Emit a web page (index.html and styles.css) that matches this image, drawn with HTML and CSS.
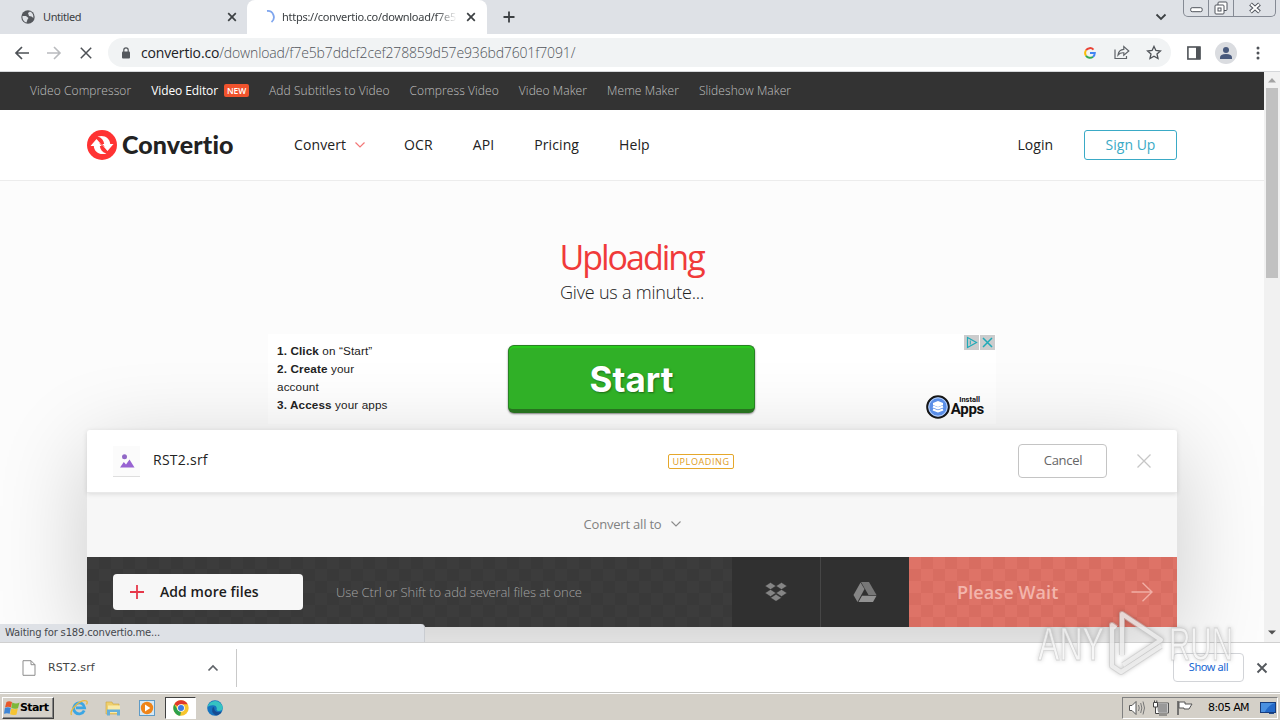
FILE: index.html
```html
<!DOCTYPE html>
<html lang="en">
<head>
    <meta charset="UTF-8">
    <title>Convertio</title>
    <link rel="stylesheet" href="styles.css">
</head>
<body>
    <div class="tab-strip">
        <div class="tab">
            <svg width="14" height="14" viewBox="0 0 14 14"><circle cx="7" cy="7" r="6.7" fill="#54575c"/><path d="M1.500 6 L5 6 L7.500 8 L6.500 9.500 L5.500 12.500 C3 12 1 9 1.500 6 Z M7 3 L9 1.600 C11.500 2.500 12.700 5 12.300 8 L10.500 6.500 L8 6 Z" fill="#dee1e6"/></svg>
            <span class="tab-title">Untitled</span>
            <svg width="10" height="10" viewBox="0 0 10 10"><path d="M1.200 1.200 L8.800 8.800 M8.800 1.200 L1.200 8.800" stroke="#3c4043" stroke-width="1.700"/></svg>
        </div>
        <div class="tab active">
            <svg width="14" height="14" viewBox="0 0 14 14"><path d="M6 1 A6.200 6.200 0 0 1 10.500 12" fill="none" stroke="#7fa6ee" stroke-width="1.800"/></svg>
            <span class="tab-title">https://convertio.co/download/f7e5</span>
            <svg width="10" height="10" viewBox="0 0 10 10"><path d="M1.200 1.200 L8.800 8.800 M8.800 1.200 L1.200 8.800" stroke="#3c4043" stroke-width="1.700"/></svg>
        </div>
        <svg class="new-tab" width="12" height="12" viewBox="0 0 12 12"><path d="M6 0.500 V11.500 M0.500 6 H11.500" stroke="#3c4043" stroke-width="1.800"/></svg>
        <svg class="tab-search" width="12" height="8" viewBox="0 0 12 8"><path d="M1.500 1.500 L6 6 L10.500 1.500" fill="none" stroke="#3c4043" stroke-width="1.800"/></svg>
        <div class="window-buttons">
            <span class="win-min"><svg width="13" height="6" viewBox="0 0 13 6"><rect x="0.700" y="0.700" width="11.500" height="4" rx="1.500" fill="#fff" stroke="#50545c"/></svg></span>
            <span class="win-max"><svg width="14" height="14" viewBox="0 0 14 14"><rect x="4" y="1" width="9" height="8.500" rx="1" fill="#fff" stroke="#50545c"/><rect x="1" y="4" width="9" height="9" rx="1" fill="#fff" stroke="#50545c"/><rect x="4" y="7" width="3" height="3" fill="none" stroke="#50545c"/></svg></span>
            <span class="win-close"><svg width="14" height="12" viewBox="0 0 14 12"><path d="M2.500 2 L11.500 10 M11.500 2 L2.500 10" stroke="#50545c" stroke-width="4"/><path d="M2.900 2.300 L11.100 9.700 M11.100 2.300 L2.900 9.700" stroke="#fff" stroke-width="2"/></svg></span>
        </div>
    </div>

    <div class="toolbar">
        <svg class="back" width="16" height="14" viewBox="0 0 16 14"><path d="M15 7 H2 M8 1 L2 7 L8 13" fill="none" stroke="#4d5156" stroke-width="1.700"/></svg>
        <svg class="forward" width="16" height="14" viewBox="0 0 16 14"><path d="M1 7 H14 M8 1 L14 7 L8 13" fill="none" stroke="#b9bbbe" stroke-width="1.600"/></svg>
        <svg class="stop" width="12" height="12" viewBox="0 0 12 12"><path d="M0.800 0.800 L11.200 11.200 M11.200 0.800 L0.800 11.200" stroke="#4d5156" stroke-width="1.500"/></svg>
        <div class="address">
            <svg width="8" height="12" viewBox="0 0 8 12"><rect x="0" y="4.500" width="8" height="7" rx="1" fill="#54585d"/><path d="M1.800 5 V3 A2.200 2.200 0 0 1 6.200 3 V5" fill="none" stroke="#54585d" stroke-width="1.200"/></svg>
            <span class="url"><b>convertio.co</b>/download/f7e5b7ddcf2cef278859d57e936bd7601f7091/</span>
            <svg width="12" height="12" viewBox="0 0 12 12"><path d="M2 3.300 A4.800 4.800 0 0 1 9.500 2.600" fill="none" stroke="#ea4335" stroke-width="2"/><path d="M2 3.300 A4.900 4.900 0 0 0 2 8.700" fill="none" stroke="#fbbc05" stroke-width="2"/><path d="M2 8.700 A4.800 4.800 0 0 0 9 9.700" fill="none" stroke="#34a853" stroke-width="2"/><path d="M6 6 H10.800 Q10.700 8.500 9 9.700" fill="none" stroke="#4285f4" stroke-width="2"/></svg>
            <svg class="share" width="16" height="15" viewBox="0 0 16 15"><path d="M1 4.500 V13.500 H12.500 V11" fill="none" stroke="#5f6368" stroke-width="1.200"/><path d="M4 10 C4.500 6.500 7 4.500 9.800 4.400 V1.500 L14.800 6 L9.800 10.300 V7.800 C7.500 7.600 5.500 8.200 4 10 Z" fill="none" stroke="#5f6368" stroke-width="1.200"/></svg>
            <svg width="16" height="15" viewBox="0 0 16 15"><path d="M8 1.400 L9.900 5.500 L14.400 6 L11 9 L12 13.500 L8 11.200 L4 13.500 L5 9 L1.600 6 L6.100 5.500 Z" fill="none" stroke="#4d5156" stroke-width="1.300"/></svg>
        </div>
        <svg class="side-panel" width="14" height="14" viewBox="0 0 14 14"><rect x="0.900" y="1" width="12" height="12" fill="none" stroke="#4f5358" stroke-width="1.600"/><rect x="9" y="1" width="4.500" height="12" fill="#4f5358"/></svg>
        <svg class="avatar" width="22" height="22" viewBox="0 0 22 22"><circle cx="11" cy="11" r="11" fill="#dadce0"/><circle cx="11" cy="8" r="3" fill="#48597c"/><path d="M5 17 V15.500 Q5 12 11 12 T17 15.500 V17 Z" fill="#48597c"/></svg>
        <svg class="menu-dots" width="4" height="14" viewBox="0 0 4 14"><circle cx="2" cy="2" r="1.500" fill="#4f5358"/><circle cx="2" cy="7" r="1.500" fill="#4f5358"/><circle cx="2" cy="12" r="1.500" fill="#4f5358"/></svg>
    </div>

    <div class="viewport">
        <div class="page">
            <div class="top-links">
                <span>Video Compressor</span>
                <span class="current">Video Editor<em>NEW</em></span>
                <span>Add Subtitles to Video</span>
                <span>Compress Video</span>
                <span>Video Maker</span>
                <span>Meme Maker</span>
                <span>Slideshow Maker</span>
            </div>

            <div class="header">
                <div class="logo">
                    <svg width="30" height="30" viewBox="0 0 30 30"><circle cx="15" cy="15" r="15" fill="#ff3333"/><path d="M3.500 16 L9.500 9 L16 16 H12.800 C13.200 19.500 15.500 22.500 19.500 23.500 C12.500 25.500 7.200 22 6.800 16 Z" fill="#fff"/><path d="M26.500 14 L20.500 21 L14 14 H17.200 C16.800 10.500 14.500 7.500 10.500 6.500 C17.500 4.500 22.800 8 23.200 14 Z" fill="#fff"/><path d="M11.500 10.500 L17 16.500 M13 13.500 L18.500 19.500" stroke="#ff3333" stroke-width="1"/></svg>
                    <span>Convertio</span>
                </div>
                <div class="nav">
                    <span>Convert<svg width="12" height="8" viewBox="0 0 12 8"><path d="M1.500 1.500 L6 6 L10.500 1.500" fill="none" stroke="#f37777" stroke-width="1.200"/></svg></span>
                    <span>OCR</span>
                    <span>API</span>
                    <span>Pricing</span>
                    <span>Help</span>
                </div>
                <span class="login">Login</span>
                <span class="sign-up">Sign Up</span>
            </div>

            <div class="hero">
                <h1>Uploading</h1>
                <p>Give us a minute...</p>
            </div>

            <div class="ad">
                <div class="ad-steps">
                    <b>1. Click</b> on “Start”<br>
                    <b>2. Create</b> your<br>
                    account<br>
                    <b>3. Access</b> your apps
                </div>
                <div class="ad-start">Start</div>
                <div class="ad-side">
                    <div class="ad-choices">
                        <svg width="15" height="15" viewBox="0 0 15 15"><rect width="15" height="15" fill="#cbcccd"/><path d="M3.500 2.500 V12.500 L12.500 7.500 Z" fill="none" stroke="#20aab8" stroke-width="1.200"/><path d="M6.300 5.500 V9.500" stroke="#20aab8"/></svg>
                        <svg width="15" height="15" viewBox="0 0 15 15"><rect width="15" height="15" fill="#cbcccd"/><path d="M3 3 L12 12 M12 3 L3 12" stroke="#20aab8" stroke-width="1.500"/></svg>
                    </div>
                    <div class="ad-brand">
                        <svg width="24" height="24" viewBox="0 0 24 24"><circle cx="12" cy="12" r="10.800" fill="#5b8fe8" stroke="#161616" stroke-width="2"/><circle cx="12" cy="12" r="9.200" fill="none" stroke="#dce8fd" stroke-width="0.800"/><path d="M12 6 L17 8 V10 L12 12 L7 10 V8 Z" fill="#fff"/><path d="M7 11.500 L12 13.500 L17 11.500 M7 14.500 L12 16.500 L17 14.500" fill="none" stroke="#fff" stroke-width="2"/></svg>
                        <div><small>Install</small><strong>Apps</strong></div>
                    </div>
                </div>
            </div>

            <div class="card">
                <div class="file-row">
                    <div class="file-icon"><svg width="16" height="14" viewBox="0 0 16 14"><circle cx="5.500" cy="2.800" r="2.500" fill="#9168c6"/><path d="M1 13.500 L4.800 8 L7 10.500 L10.500 5.500 L15.500 13.500 Z" fill="#9863d2"/></svg></div>
                    <span class="file-name">RST2.srf</span>
                    <span class="status">UPLOADING</span>
                    <span class="cancel">Cancel</span>
                    <svg class="remove" width="16" height="16" viewBox="0 0 16 16"><path d="M1.500 1.500 L14.500 14.500 M14.500 1.500 L1.500 14.500" stroke="#c6c6c6" stroke-width="1.300"/></svg>
                </div>
                <div class="convert-row">
                    <span>Convert all to</span>
                    <svg width="12" height="8" viewBox="0 0 12 8"><path d="M1.500 1.500 L6 6 L10.500 1.500" fill="none" stroke="#8b8b8b" stroke-width="1.100"/></svg>
                </div>
                <div class="actions">
                    <div class="add-area">
                        <div class="add-files">
                            <svg width="14" height="14" viewBox="0 0 14 14"><path d="M7 0 V14 M0 7 H14" stroke="#e6384a" stroke-width="1.800"/></svg>
                            <span>Add more files</span>
                        </div>
                        <span class="hint">Use Ctrl or Shift to add several files at once</span>
                    </div>
                    <div class="source">
                        <svg width="22" height="20" viewBox="0 0 22 20"><path d="M5.500 0.500 L11 4 L5.500 7.500 L0 4 Z M16.500 0.500 L22 4 L16.500 7.500 L11 4 Z M5.500 7.500 L11 11 L5.500 14.500 L0 11 Z M16.500 7.500 L22 11 L16.500 14.500 L11 11 Z M11 12.300 L16.500 15.800 L11 19.300 L5.500 15.800 Z" fill="#858585" stroke="#303030" stroke-width="0.500"/></svg>
                    </div>
                    <div class="source">
                        <svg width="24" height="20" viewBox="0 0 24 20"><path d="M8 0 H16 L23.500 13 H15.500 Z" fill="#777"/><path d="M7.500 0.500 L11.500 7 L4.500 20 L0.500 13 Z" fill="#858585"/><path d="M9 13.800 H23.500 L20 20 H5.500 Z" fill="#929292"/></svg>
                    </div>
                    <div class="wait">
                        <span>Please Wait</span>
                        <svg width="22" height="20" viewBox="0 0 22 20"><path d="M0.500 10 H21 M11.500 0.800 L21 10 L11.500 19.200" fill="none" stroke="#f1aea5" stroke-width="1.400"/></svg>
                    </div>
                </div>
            </div>
        </div>
        <div class="scrollbar">
            <svg width="16" height="16" viewBox="0 0 16 16"><path d="M4 10.500 L8 6 L12 10.500 Z" fill="#a3a3a3"/></svg>
            <div class="thumb"></div>
            <svg class="down" width="16" height="16" viewBox="0 0 16 16"><path d="M4 4.500 H12 L8 8.500 Z" fill="#505050"/></svg>
        </div>
        <div class="status-bubble">Waiting for s189.convertio.me...</div>
    </div>

    <div class="downloads">
        <div class="download-item">
            <svg width="14" height="16" viewBox="0 0 14 16"><path d="M1 0.700 H9 L13 4.700 V15.300 H1 Z" fill="#fff" stroke="#8d8d8d"/><path d="M9 0.700 V4.700 H13" fill="none" stroke="#8d8d8d"/></svg>
            <span>RST2.srf</span>
            <svg class="caret" width="12" height="8" viewBox="0 0 12 8"><path d="M1.500 6.500 L6 2 L10.500 6.500" fill="none" stroke="#5f6368" stroke-width="1.700"/></svg>
        </div>
        <span class="show-all">Show all</span>
        <svg width="12" height="12" viewBox="0 0 12 12"><path d="M1.500 1.500 L10.500 10.500 M10.500 1.500 L1.500 10.500" stroke="#54585d" stroke-width="1.900"/></svg>
    </div>

    <div class="taskbar">
        <div class="start-button">
            <svg width="16" height="16" viewBox="0 0 16 16"><path d="M2.500 2 Q5 0.300 8 2 L7 7.500 Q4 6 1 7.500 Z" fill="#e8582b"/><path d="M8.300 2.500 Q12 4.500 15.500 2.500 L14 8.200 Q10.500 9.500 7.300 8 Z" fill="#7db83a"/><path d="M0.900 8 Q4 6.600 6.800 8.100 L5.700 13.800 Q3 12.500 0 13.800 Z" fill="#3f86d6"/><path d="M7.200 8.500 Q10.500 10 13.800 8.600 L12.500 14.500 Q9.500 15.800 6.100 14.300 Z" fill="#f6c431"/></svg>
            <span>Start</span>
        </div>
        <div class="quick-launch">
            <span><svg width="18" height="18" viewBox="0 0 18 18"><path d="M14.200 11.500 A5.500 5.500 0 1 1 14.600 8.800 H6" fill="none" stroke="#3ba6e4" stroke-width="2.800"/><path d="M1.500 16 C-1 11.500 10 0 16.500 2 C17.500 2.500 17 4.500 16.500 5.500" fill="none" stroke="#e9b93e" stroke-width="1.300"/></svg></span>
            <span><svg width="18" height="18" viewBox="0 0 18 18"><path d="M2 3 H8 L9 5 H15 V15 H2 Z" fill="#efcf6c" stroke="#c9a441" stroke-width="0.600"/><path d="M4 6.500 H16 V14 H4 Z" fill="#f9eaa8"/><path d="M3 16.500 V10.500 H16 V16.500 H13 V13 H6 V16.500 Z" fill="#67afd8"/></svg></span>
            <span><svg width="18" height="18" viewBox="0 0 18 18"><rect x="1.500" y="1.500" width="15" height="15" fill="#d5e8f5" stroke="#5f9bc6"/><circle cx="9" cy="9" r="6.200" fill="#ef8418"/><path d="M7 5.500 L12.300 9 L7 12.500 Z" fill="#fff"/></svg></span>
            <span class="running"><svg width="16" height="16" viewBox="0 0 16 16"><circle cx="8" cy="8" r="7.700" fill="#f7c52d"/><path d="M8 8 L1.300 4.200 A7.700 7.700 0 0 1 14.700 4.200 H8 Z" fill="#e0382c"/><path d="M1.300 4.200 L4.700 10 L8 11.800 L7.200 15.700 A7.700 7.700 0 0 1 1.300 4.200 Z" fill="#2da14c"/><circle cx="8" cy="8" r="3.800" fill="#fff"/><circle cx="8" cy="8" r="3" fill="#3d7be2"/></svg></span>
            <span><svg width="18" height="18" viewBox="0 0 18 18"><circle cx="9" cy="9" r="7.800" fill="#1673bf"/><path d="M1.500 8 A7.800 7.800 0 0 1 16.800 8.500 Q16.500 12 12.500 12 Q10 11.800 10.800 9.500 Q10.500 6 6.500 6.200 Q3 6.300 1.500 8 Z" fill="#35c3c2"/><path d="M7 8 Q4 13 10 16.600 Q14.500 15.500 15.700 12.800 Q8.500 14.500 8 8.500 Z" fill="#174c91"/></svg></span>
        </div>
        <div class="tray">
            <svg width="18" height="16" viewBox="0 0 18 16"><path d="M1.500 5.500 H4 L8 1.500 V14.500 L4 10.500 H1.500 Z" fill="#fff" stroke="#555"/><path d="M10.500 5 Q12 8 10.500 11 M12.700 3 Q15 8 12.700 13 M15 1.500 Q18 8 15 14.500" fill="none" stroke="#777"/></svg>
            <svg width="18" height="16" viewBox="0 0 18 16"><rect x="5" y="3.500" width="11" height="9" fill="#999" stroke="#fff"/><path d="M4.500 3 H16.500 V13 H4.500 M7 15 H15" fill="none" stroke="#555"/><path d="M1.500 2.500 H5.500 V7 H1.500 Z M2.500 0.500 V3 M4.800 0.500 V3 M3.500 7 V13.500 H7" fill="#fff" stroke="#444"/></svg>
            <svg width="18" height="16" viewBox="0 0 18 16"><path d="M2 1 V15" stroke="#555" stroke-width="1.500"/><path d="M3 2 H9 V4 H16 L13 9 H8 V8 H3 Z" fill="#fff" stroke="#555"/></svg>
            <span>8:05 AM</span>
            <svg width="16" height="14" viewBox="0 0 16 14"><rect x="0.500" y="1.500" width="15" height="10" fill="#2469c8" stroke="#163c7d"/><path d="M1 2 H15 Q8 4 5 11 H1 Z" fill="#4a90e0"/><path d="M9 12.500 H14" stroke="#234a88"/></svg>
        </div>
    </div>

    <svg class="watermark" width="204" height="76" viewBox="0 0 204 76">
        <g fill="#fff" fill-opacity="0.650" stroke="#c8c8c8" stroke-opacity="0.700" stroke-width="0.900">
            <text x="3" y="55" textLength="66" lengthAdjust="spacingAndGlyphs">ANY</text>
            <text x="134" y="55" textLength="64" lengthAdjust="spacingAndGlyphs">RUN</text>
        </g>
        <path class="mark-edge" d="M77 55 V20 L81 23 M87 50 V9 L126 35 L88 60 M77 55 V61 L86 67 L126 41"/>
        <path class="mark-line" d="M77 55 V20 L81 23 M87 50 V9 L126 35 L88 60 M77 55 V61 L86 67 L126 41"/>
    </svg>
</body>
</html>
```
FILE: styles.css
```css
* {
    box-sizing: border-box;
}

body {
    margin: 0;
    height: 720px;
    display: flex;
    flex-direction: column;
    overflow: hidden;
    position: relative;
    font-family: "Open Sans", sans-serif;
    background: #fff;
}

svg {
    display: block;
    flex: none;
}

span {
    white-space: nowrap;
}

/* browser chrome */
.tab-strip {
    height: 34px;
    flex: none;
    display: flex;
    align-items: center;
    background: #dee1e6;
    font-family: "Noto Sans", sans-serif;
    font-size: 11px;
    color: #3c4043;
}

.tab {
    width: 247px;
    height: 34px;
    padding: 0 10px 0 21px;
    display: flex;
    align-items: center;
}

.tab.active {
    width: 240px;
    padding: 0 11px 0 14px;
    background: #fff;
    border-radius: 8px 8px 0 0;
}

.tab-title {
    flex: 1;
    margin: 0 13px 0 8px;
    position: relative;
    top: -1px;
    letter-spacing: -0.4px;
}

.active .tab-title {
    margin: 0 9px 0 7px;
    letter-spacing: -0.27px;
    -webkit-mask-image: linear-gradient(to right, #000 88%, transparent);
}

.new-tab {
    margin-left: 16px;
}

.tab-search {
    margin-left: auto;
    margin-right: 16px;
}

.window-buttons {
    display: flex;
    align-self: flex-start;
    height: 17px;
    width: 93px;
    margin-right: 4px;
    border: 1px solid #858a94;
    border-top: 0;
    border-radius: 0 0 5px 5px;
}

.window-buttons span {
    display: flex;
    align-items: center;
    justify-content: center;
    width: 25px;
    border-right: 1px solid #858a94;
}

.window-buttons .win-min {
    padding-top: 4px;
}

.window-buttons .win-close {
    width: 41px;
    border: 0;
}

.toolbar {
    height: 38px;
    flex: none;
    display: flex;
    align-items: center;
    padding: 0 19px 0 14px;
    border-bottom: 1px solid #d5d7da;
}

.forward {
    margin-left: 16px;
}

.stop {
    margin-left: 18px;
}

.address {
    flex: 1;
    height: 29px;
    margin: 0 16px 0 16px;
    padding: 0 9px 0 14px;
    display: flex;
    align-items: center;
    background: #f1f3f4;
    border-radius: 15px;
}

.url {
    flex: 1;
    margin-left: 11px;
    font-size: 14px;
    font-weight: 300;
    letter-spacing: -0.15px;
    color: #50545a;
}

.url b {
    font-weight: 400;
    color: #202124;
}

.share {
    margin: 0 16px 0 18px;
}

.avatar {
    margin: 0 19px 0 14px;
}

.menu-dots {
    margin-right: 1px;
}

/* page area */
.viewport {
    height: 571px;
    flex: none;
    display: flex;
    position: relative;
    overflow: hidden;
    border-bottom: 1px solid #d0d0d0;
}

.page {
    width: 1264px;
    background: #fcfcfc;
    overflow: hidden;
}

.top-links {
    height: 38px;
    padding: 0 0 1px 30px;
    display: flex;
    align-items: center;
    gap: 20px;
    background: #333;
    color: #c0c0c0;
    font-size: 12px;
    font-weight: 300;
    letter-spacing: 0.08px;
}

.top-links .current {
    display: flex;
    align-items: center;
    color: #fff;
    font-weight: 400;
    letter-spacing: -0.1px;
}

.top-links em {
    margin-left: 6px;
    width: 25px;
    height: 13px;
    line-height: 13px;
    border-radius: 2px;
    background: #f0532d;
    font-size: 8.5px;
    font-style: normal;
    font-weight: 600;
    text-align: center;
}

.header {
    height: 71px;
    padding: 0 87px;
    display: flex;
    align-items: center;
    background: #fff;
    border-bottom: 1px solid #ececec;
    color: #222;
    font-size: 14px;
}

.logo {
    width: 207px;
    display: flex;
    align-items: center;
    gap: 5px;
    font-family: Lato, sans-serif;
    font-size: 25px;
    font-weight: 900;
    line-height: 30px;
    letter-spacing: 0.1px;
}

.logo span {
    padding-bottom: 2px;
}

.nav {
    display: flex;
    gap: 40px;
    flex: 1;
    padding-bottom: 2px;
    letter-spacing: 0.1px;
}

.nav span {
    display: flex;
    align-items: center;
}

.nav svg {
    margin: 2px -2px 0 8px;
}

.login {
    margin-right: 31px;
    padding-bottom: 2px;
}

.sign-up {
    width: 93px;
    height: 30px;
    line-height: 28px;
    border: 1px solid #3aaac6;
    border-radius: 3px;
    color: #3aaac6;
    text-align: center;
}

.hero {
    height: 153px;
    padding-top: 52px;
    text-align: center;
}

h1 {
    margin: 0;
    font-size: 34px;
    line-height: 48px;
    font-weight: 400;
    letter-spacing: -2px;
    text-indent: -1px;
    color: #f03a3a;
}

.hero p {
    margin: 0;
    font-size: 18px;
    line-height: 22px;
    font-weight: 300;
    letter-spacing: -0.2px;
    color: #222;
}

.ad {
    width: 728px;
    height: 90px;
    margin: 0 0 6px 268px;
    display: flex;
    background: #fff;
}

.ad-steps {
    width: 240px;
    padding: 8px 0 0 9px;
    font-family: "Liberation Sans", sans-serif;
    font-size: 11.7px;
    line-height: 18px;
    letter-spacing: 0.13px;
    color: #222;
}

.ad-start {
    position: relative;
    width: 247px;
    height: 68px;
    margin-top: 11px;
    border: 1px solid #278223;
    border-bottom: 4px solid #27721f;
    border-radius: 6px;
    box-shadow: inset 0 2px 1px #28cb1b, 0 1px 2px rgba(0, 0, 0, 0.5);
    background: #30b027;
    color: #fff;
    font-family: Inter, sans-serif;
    font-size: 35px;
    font-weight: 700;
    line-height: 67px;
    text-align: center;
    text-shadow: 1px 1px 2px rgba(0, 0, 0, 0.4);
}

.ad-side {
    flex: 1;
    display: flex;
    flex-direction: column;
    justify-content: space-between;
    align-items: flex-end;
    padding: 1px 1px 5px 0;
}

.ad-choices {
    display: flex;
    gap: 1px;
}

.ad-brand {
    display: flex;
    align-items: center;
    margin-right: 11px;
    font-family: Roboto, sans-serif;
    color: #111;
}

.ad-brand div {
    display: flex;
    flex-direction: column;
    align-items: flex-end;
    width: 34px;
}

.ad-brand small {
    font-size: 7.5px;
    line-height: 7px;
    font-weight: 700;
    margin-right: 4px;
}

.ad-brand strong {
    font-size: 15px;
    line-height: 12px;
    letter-spacing: -0.3px;
    padding-bottom: 3px;
}

.card {
    width: 1090px;
    margin-left: 87px;
    border-radius: 3px 3px 0 0;
    box-shadow: 0 20px 90px rgba(0, 0, 0, 0.2);
    background: #f7f7f7;
}

.file-row {
    height: 63px;
    padding: 0 25px 0 26px;
    display: flex;
    align-items: center;
    background: #fff;
    border-bottom: 1px solid #e9e9e9;
    border-radius: 3px 3px 0 0;
    box-shadow: 0 1px 5px rgba(0, 0, 0, 0.12);
}

.file-icon {
    width: 27px;
    height: 31px;
    display: flex;
    align-items: center;
    justify-content: center;
    background: #fbfbfb;
    border-bottom: 1px solid #dedede;
}

.file-name {
    width: 515px;
    margin-left: 13px;
    padding-bottom: 3px;
    font-size: 14px;
    letter-spacing: 0.25px;
    color: #222;
}

.status {
    width: 66px;
    height: 15px;
    line-height: 13px;
    border: 1px solid #e5a72b;
    border-radius: 2px;
    color: #e09b1a;
    font-size: 9px;
    letter-spacing: 0.6px;
    text-align: center;
}

.cancel {
    width: 89px;
    height: 34px;
    margin-left: auto;
    padding-left: 1px;
    line-height: 31px;
    border: 1px solid #c4c4c4;
    border-radius: 4px;
    color: #666;
    font-size: 13px;
    letter-spacing: -0.3px;
    text-align: center;
}

.remove {
    margin-left: 29px;
}

.convert-row {
    height: 64px;
    display: flex;
    align-items: center;
    justify-content: center;
    gap: 9px;
    padding: 0 0 2px 2px;
    color: #818181;
    font-size: 13px;
    letter-spacing: -0.2px;
}

.actions {
    height: 70px;
    display: flex;
}

.add-area {
    width: 645px;
    padding-left: 26px;
    display: flex;
    align-items: center;
    background: repeating-conic-gradient(#393939 0 25%, #3c3c3c 0 50%) 0 0 / 24px 24px;
}

.add-files {
    width: 190px;
    height: 36px;
    padding-left: 17px;
    display: flex;
    align-items: center;
    gap: 16px;
    background: #f7f7f7;
    border-radius: 4px;
    font-size: 14px;
    font-weight: 600;
    letter-spacing: 0.07px;
    color: #1c1c1c;
}

.add-files span {
    padding-bottom: 1px;
}

.hint {
    margin-left: 33px;
    color: #a3a3a3;
    font-size: 13px;
    font-weight: 300;
    letter-spacing: -0.1px;
}

.source {
    width: 89px;
    padding-right: 2px;
    display: flex;
    align-items: center;
    justify-content: center;
    background: #303030;
}

.source + .source {
    width: 89px;
    margin-left: -1px;
    padding-right: 0;
    border-left: 1px solid #464646;
}

.wait {
    flex: 1;
    padding: 0 24px 0 48px;
    display: flex;
    align-items: center;
    justify-content: space-between;
    background: repeating-conic-gradient(#d86d61 0 25%, #de7367 0 50%) 0 0 / 24px 24px;
    color: #f3b5ac;
    font-size: 18px;
    font-weight: 600;
    letter-spacing: 0.1px;
}

.scrollbar {
    position: relative;
    width: 16px;
    background: #f1f1f1;
    display: flex;
    flex-direction: column;
}

.thumb {
    width: 12px;
    height: 190px;
    margin-left: 2px;
    background: #c1c1c1;
}

.down {
    margin-top: auto;
}

.status-bubble {
    position: absolute;
    left: 0;
    bottom: 0;
    width: 425px;
    height: 18px;
    padding-left: 5px;
    line-height: 18px;
    background: #dee1e6;
    border: 1px solid #c9ccd1;
    border-width: 0 1px 0 0;
    border-radius: 0 4px 0 0;
    font-family: "DejaVu Sans", sans-serif;
    font-size: 10px;
    letter-spacing: -0.17px;
    color: #45484d;
}

.downloads {
    height: 50px;
    flex: none;
    display: flex;
    align-items: center;
    padding-right: 12px;
    border-bottom: 1px solid #c5c5c2;
    background: #fff;
}

.download-item {
    width: 237px;
    height: 38px;
    padding: 0 17px 0 22px;
    display: flex;
    align-items: center;
    border-right: 1px solid #c9c9c9;
    font-family: "DejaVu Sans", sans-serif;
    font-size: 11px;
    letter-spacing: 0.1px;
    color: #444;
}

.download-item span {
    margin-left: 12px;
}

.caret {
    margin-left: auto;
}

.show-all {
    width: 71px;
    height: 29px;
    margin: 0 12px 0 auto;
    line-height: 25px;
    border: 1px solid #d2d4d8;
    border-radius: 4px;
    color: #1967d2;
    font-family: "Noto Sans", sans-serif;
    font-size: 11px;
    letter-spacing: -0.4px;
    text-align: center;
}

/* windows taskbar */
.taskbar {
    height: 27px;
    flex: none;
    display: flex;
    align-items: center;
    padding: 2px 2px 1px;
    background: #d4d0c8;
    font-family: "DejaVu Sans", sans-serif;
    font-size: 11px;
    color: #000;
    border-top: 1px solid #fff;
}

.start-button {
    width: 52px;
    height: 22px;
    padding-left: 1px;
    display: flex;
    align-items: center;
    border: 1px solid;
    border-color: #fff #404040 #404040 #fff;
    box-shadow: inset -1px -1px #858585;
    font-weight: 700;
    letter-spacing: -0.6px;
}

.quick-launch {
    display: flex;
    margin-left: 9px;
    gap: 3px;
}

.quick-launch span {
    width: 31px;
    height: 22px;
    display: flex;
    align-items: center;
    justify-content: center;
}

.quick-launch .running {
    background: #fff;
    border: 1px solid;
    border-color: #404040 #fff #fff #404040;
}

.tray {
    width: 156px;
    height: 22px;
    margin-left: auto;
    padding: 0 1px 0 5px;
    display: flex;
    align-items: center;
    gap: 6px;
    border: 1px solid;
    border-color: #808080 #fff #fff #808080;
}

.tray span {
    margin-left: auto;
    margin-right: 5px;
    letter-spacing: -0.6px;
}

.watermark {
    position: absolute;
    left: 1035px;
    top: 605px;
    filter: drop-shadow(0 0 2px rgba(0, 0, 0, 0.25));
}

.watermark text {
    font-family: "Liberation Sans", sans-serif;
    font-size: 47px;
}

.mark-edge {
    fill: none;
    stroke: #c8c8c8;
    stroke-opacity: 0.6;
    stroke-width: 6px;
    stroke-linejoin: round;
}

.mark-line {
    fill: none;
    stroke: #fff;
    stroke-opacity: 0.6;
    stroke-width: 4px;
    stroke-linejoin: round;
}
```
